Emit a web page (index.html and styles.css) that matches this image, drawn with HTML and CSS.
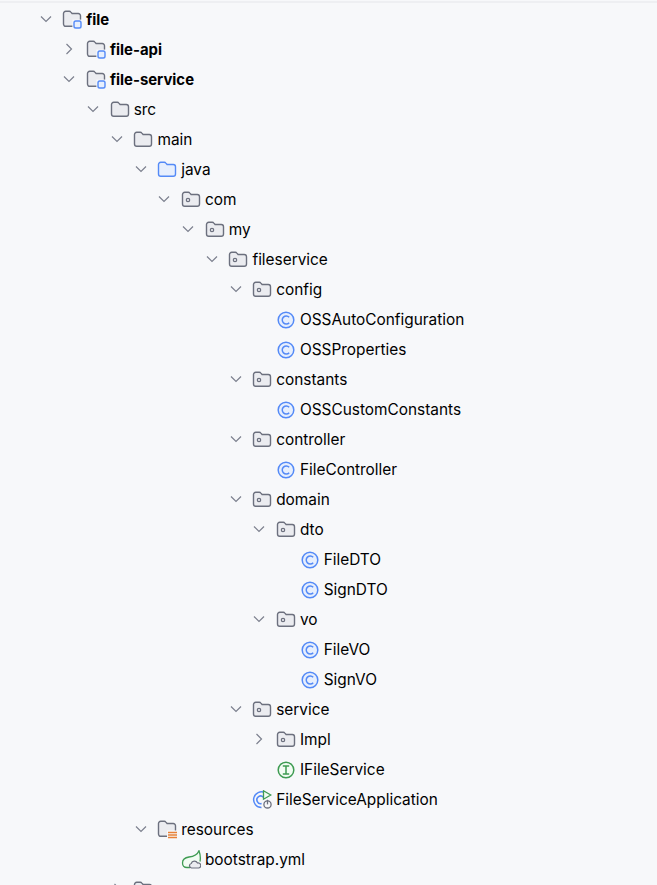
FILE: index.html
```html
<!DOCTYPE html>
<html lang="en">
<head>
<meta charset="utf-8">
<title>Project tree</title>
<link rel="stylesheet" href="styles.css">
</head>
<body>
<svg class="defs" width="0" height="0" aria-hidden="true">
  <defs>
    <symbol id="down" viewBox="0 0 16 16"><path d="M3 5.500l5 5 5-5" fill="none" stroke="#7c808e" stroke-width="1.200"/></symbol>
    <symbol id="right" viewBox="0 0 16 16"><path d="M5.500 3l5 5-5 5" fill="none" stroke="#7c808e" stroke-width="1.200"/></symbol>
    <symbol id="folder" viewBox="0 0 20 20"><path d="M1.500 4.500a2.200 2.200 0 0 1 2.200-2.200h3.600c.7 0 1.200.3 1.600.8l1.200 1.400h6.200a2.200 2.200 0 0 1 2.200 2.200v7.400a2.200 2.200 0 0 1-2.200 2.200H3.700a2.200 2.200 0 0 1-2.200-2.200z" fill="#ebecf0" stroke="#6c707e" stroke-width="1.400"/></symbol>
    <symbol id="source" viewBox="0 0 20 20"><path d="M1.500 4.500a2.200 2.200 0 0 1 2.200-2.200h3.600c.7 0 1.200.3 1.600.8l1.200 1.400h6.200a2.200 2.200 0 0 1 2.200 2.200v7.400a2.200 2.200 0 0 1-2.200 2.200H3.700a2.200 2.200 0 0 1-2.200-2.200z" fill="#e7effd" stroke="#548af7" stroke-width="1.400"/></symbol>
    <symbol id="package" viewBox="0 0 20 20"><path d="M1.500 4.500a2.200 2.200 0 0 1 2.200-2.200h3.600c.7 0 1.200.3 1.600.8l1.200 1.400h6.200a2.200 2.200 0 0 1 2.200 2.200v7.400a2.200 2.200 0 0 1-2.200 2.200H3.700a2.200 2.200 0 0 1-2.200-2.200z" fill="#ebecf0" stroke="#6c707e" stroke-width="1.400"/><circle cx="7" cy="10" r="1.700" fill="none" stroke="#6c707e" stroke-width="1.200"/></symbol>
    <symbol id="module" viewBox="0 0 20 20"><path d="M1.500 3.500a2.200 2.200 0 0 1 2.200-2.200h3.600c.7 0 1.200.3 1.600.8l1.200 1.400h6.200a2.200 2.200 0 0 1 2.200 2.200v8.400a2.200 2.200 0 0 1-2.200 2.200H3.700a2.200 2.200 0 0 1-2.200-2.200z" fill="#ebecf0" stroke="#6c707e" stroke-width="1.400"/><rect x="10.400" y="9.600" width="9.600" height="9.600" fill="#f7f8fa"/><rect x="12" y="11" width="7" height="7" rx="1.800" fill="#e7effd" stroke="#548af7" stroke-width="1.400"/></symbol>
    <symbol id="resources" viewBox="0 0 20 20"><path d="M1.500 3.500a2.200 2.200 0 0 1 2.200-2.200h3.600c.7 0 1.200.3 1.600.8l1.200 1.400h6.200a2.200 2.200 0 0 1 2.200 2.200v8.400a2.200 2.200 0 0 1-2.200 2.200H3.700a2.200 2.200 0 0 1-2.200-2.200z" fill="#ebecf0" stroke="#6c707e" stroke-width="1.400"/><rect x="10" y="10.500" width="10" height="9" fill="#f7f8fa"/><path d="M11 12.500h9M11 15h9M11 17.500h9" stroke="#e66d17" stroke-width="1.300" opacity=".85"/></symbol>
    <symbol id="class" viewBox="0 0 20 20"><circle cx="10" cy="10" r="7.800" fill="#e7effd" stroke="#548af7" stroke-width="1.500"/><path d="M13.200 7.300a4 4 0 1 0 0 5.400" fill="none" stroke="#548af7" stroke-width="1.500"/></symbol>
    <symbol id="iface" viewBox="0 0 20 20"><circle cx="10" cy="10" r="7.800" fill="#f2fcf3" stroke="#3e9b52" stroke-width="1.500"/><path d="M6.800 6h6.400M6.800 14h6.400M10 6v8" fill="none" stroke="#3e9b52" stroke-width="1.500"/></symbol>
    <symbol id="app" viewBox="0 0 20 20"><path d="M13 2.600A7.900 7.900 0 1 0 9.500 17.600" fill="none" stroke="#548af7" stroke-width="1.500"/><path d="M11.400 7.200a3.800 3.800 0 1 0-1.800 6.300" fill="none" stroke="#548af7" stroke-width="1.500"/><path d="M11.500.8l7.300 4.200-7.300 4.200z" fill="#f2fcf3" stroke="#3e9b52" stroke-width="1.300"/><circle cx="15.500" cy="14.400" r="3.600" fill="#f7f8fa" stroke="#6c707e" stroke-width="1.300"/><path d="M15.500 9.800v4.600" stroke="#6c707e" stroke-width="1.300"/></symbol>
    <symbol id="spring" viewBox="0 0 20 20"><path d="M9 17.500H6C3 17.500 1.500 15.500 1.500 13 1.500 9.500 4.500 7.500 8 7 13 6.500 16.500 4.500 18 .8 19.500 5 19.500 9 19 11.500" fill="#f2fcf3" stroke="#3e9b52" stroke-width="1.300"/><path d="M10.500 18a2.300 2.300 0 0 1-.3-4.500 3.400 3.400 0 0 1 6.300-.5 2.500 2.500 0 0 1 1.300 5z" fill="#ebecf0" stroke="#6c707e" stroke-width="1.200"/></symbol>
  </defs>
</svg>
<main class="tree">
  <ul class="level root">
    <li>
      <div class="row strong"><svg class="chev"><use href="#down"/></svg><svg class="icon"><use href="#module"/></svg><span>file</span></div>
      <ul class="level">
        <li><div class="row strong"><svg class="chev"><use href="#right"/></svg><svg class="icon"><use href="#module"/></svg><span>file-api</span></div></li>
        <li>
          <div class="row strong"><svg class="chev"><use href="#down"/></svg><svg class="icon"><use href="#module"/></svg><span>file-service</span></div>
          <ul class="level">
            <li>
              <div class="row"><svg class="chev"><use href="#down"/></svg><svg class="icon"><use href="#folder"/></svg><span>src</span></div>
              <ul class="level">
                <li>
                  <div class="row"><svg class="chev"><use href="#down"/></svg><svg class="icon"><use href="#folder"/></svg><span>main</span></div>
                  <ul class="level">
                    <li>
                      <div class="row"><svg class="chev"><use href="#down"/></svg><svg class="icon"><use href="#source"/></svg><span>java</span></div>
                      <ul class="level">
                        <li>
                          <div class="row"><svg class="chev"><use href="#down"/></svg><svg class="icon"><use href="#package"/></svg><span>com</span></div>
                          <ul class="level">
                            <li>
                              <div class="row"><svg class="chev"><use href="#down"/></svg><svg class="icon"><use href="#package"/></svg><span>my</span></div>
                              <ul class="level">
                                <li>
                                  <div class="row"><svg class="chev"><use href="#down"/></svg><svg class="icon"><use href="#package"/></svg><span>fileservice</span></div>
                                  <ul class="level">
                                    <li>
                                      <div class="row"><svg class="chev"><use href="#down"/></svg><svg class="icon"><use href="#package"/></svg><span>config</span></div>
                                      <ul class="level">
                                        <li><div class="row"><i class="chev"></i><svg class="icon"><use href="#class"/></svg><span>OSSAutoConfiguration</span></div></li>
                                        <li><div class="row"><i class="chev"></i><svg class="icon"><use href="#class"/></svg><span>OSSProperties</span></div></li>
                                      </ul>
                                    </li>
                                    <li>
                                      <div class="row"><svg class="chev"><use href="#down"/></svg><svg class="icon"><use href="#package"/></svg><span>constants</span></div>
                                      <ul class="level">
                                        <li><div class="row"><i class="chev"></i><svg class="icon"><use href="#class"/></svg><span>OSSCustomConstants</span></div></li>
                                      </ul>
                                    </li>
                                    <li>
                                      <div class="row"><svg class="chev"><use href="#down"/></svg><svg class="icon"><use href="#package"/></svg><span>controller</span></div>
                                      <ul class="level">
                                        <li><div class="row"><i class="chev"></i><svg class="icon"><use href="#class"/></svg><span>FileController</span></div></li>
                                      </ul>
                                    </li>
                                    <li>
                                      <div class="row"><svg class="chev"><use href="#down"/></svg><svg class="icon"><use href="#package"/></svg><span>domain</span></div>
                                      <ul class="level">
                                        <li>
                                          <div class="row"><svg class="chev"><use href="#down"/></svg><svg class="icon"><use href="#package"/></svg><span>dto</span></div>
                                          <ul class="level">
                                            <li><div class="row"><i class="chev"></i><svg class="icon"><use href="#class"/></svg><span>FileDTO</span></div></li>
                                            <li><div class="row"><i class="chev"></i><svg class="icon"><use href="#class"/></svg><span>SignDTO</span></div></li>
                                          </ul>
                                        </li>
                                        <li>
                                          <div class="row"><svg class="chev"><use href="#down"/></svg><svg class="icon"><use href="#package"/></svg><span>vo</span></div>
                                          <ul class="level">
                                            <li><div class="row"><i class="chev"></i><svg class="icon"><use href="#class"/></svg><span>FileVO</span></div></li>
                                            <li><div class="row"><i class="chev"></i><svg class="icon"><use href="#class"/></svg><span>SignVO</span></div></li>
                                          </ul>
                                        </li>
                                      </ul>
                                    </li>
                                    <li>
                                      <div class="row"><svg class="chev"><use href="#down"/></svg><svg class="icon"><use href="#package"/></svg><span>service</span></div>
                                      <ul class="level">
                                        <li><div class="row"><svg class="chev"><use href="#right"/></svg><svg class="icon"><use href="#package"/></svg><span>Impl</span></div></li>
                                        <li><div class="row"><i class="chev"></i><svg class="icon"><use href="#iface"/></svg><span>IFileService</span></div></li>
                                      </ul>
                                    </li>
                                    <li><div class="row"><i class="chev"></i><svg class="icon"><use href="#app"/></svg><span>FileServiceApplication</span></div></li>
                                  </ul>
                                </li>
                              </ul>
                            </li>
                          </ul>
                        </li>
                      </ul>
                    </li>
                    <li>
                      <div class="row"><svg class="chev"><use href="#down"/></svg><svg class="icon"><use href="#resources"/></svg><span>resources</span></div>
                      <ul class="level">
                        <li><div class="row"><i class="chev"></i><svg class="icon"><use href="#spring"/></svg><span>bootstrap.yml</span></div></li>
                      </ul>
                    </li>
                  </ul>
                </li>
                <li><div class="row"><svg class="chev"><use href="#right"/></svg><svg class="icon"><use href="#folder"/></svg><span></span></div></li>
              </ul>
            </li>
          </ul>
        </li>
      </ul>
    </li>
  </ul>
</main>
</body>
</html>
```
FILE: styles.css
```css
html, body {
  margin: 0;
  height: 100%;
  overflow: hidden;
  background: #f7f8fa;
}
.defs { display: block; height: 0; }
.tree {
  margin-top: 1px;
  border-top: 2px solid #eeeff2;
  padding-top: 1px;
  font-family: Inter, "Noto Sans", sans-serif;
  font-size: 15.4px;
  color: #000;
}
.level {
  list-style: none;
  margin: 0;
  padding: 0 0 0 23.75px;
}
.root { padding-left: 37.7px; }
.row {
  display: flex;
  align-items: center;
  height: 30px;
  white-space: nowrap;
}
.chev {
  display: block;
  flex: none;
  width: 16px;
  height: 16px;
  margin-right: 8.500px;
}
.icon {
  display: block;
  flex: none;
  width: 20px;
  height: 20px;
  margin-top: 2px;
  margin-right: 4px;
}
.strong { font-size: 14.9px; font-weight: 700; }
.strong span { padding-top: 2px; }
```
